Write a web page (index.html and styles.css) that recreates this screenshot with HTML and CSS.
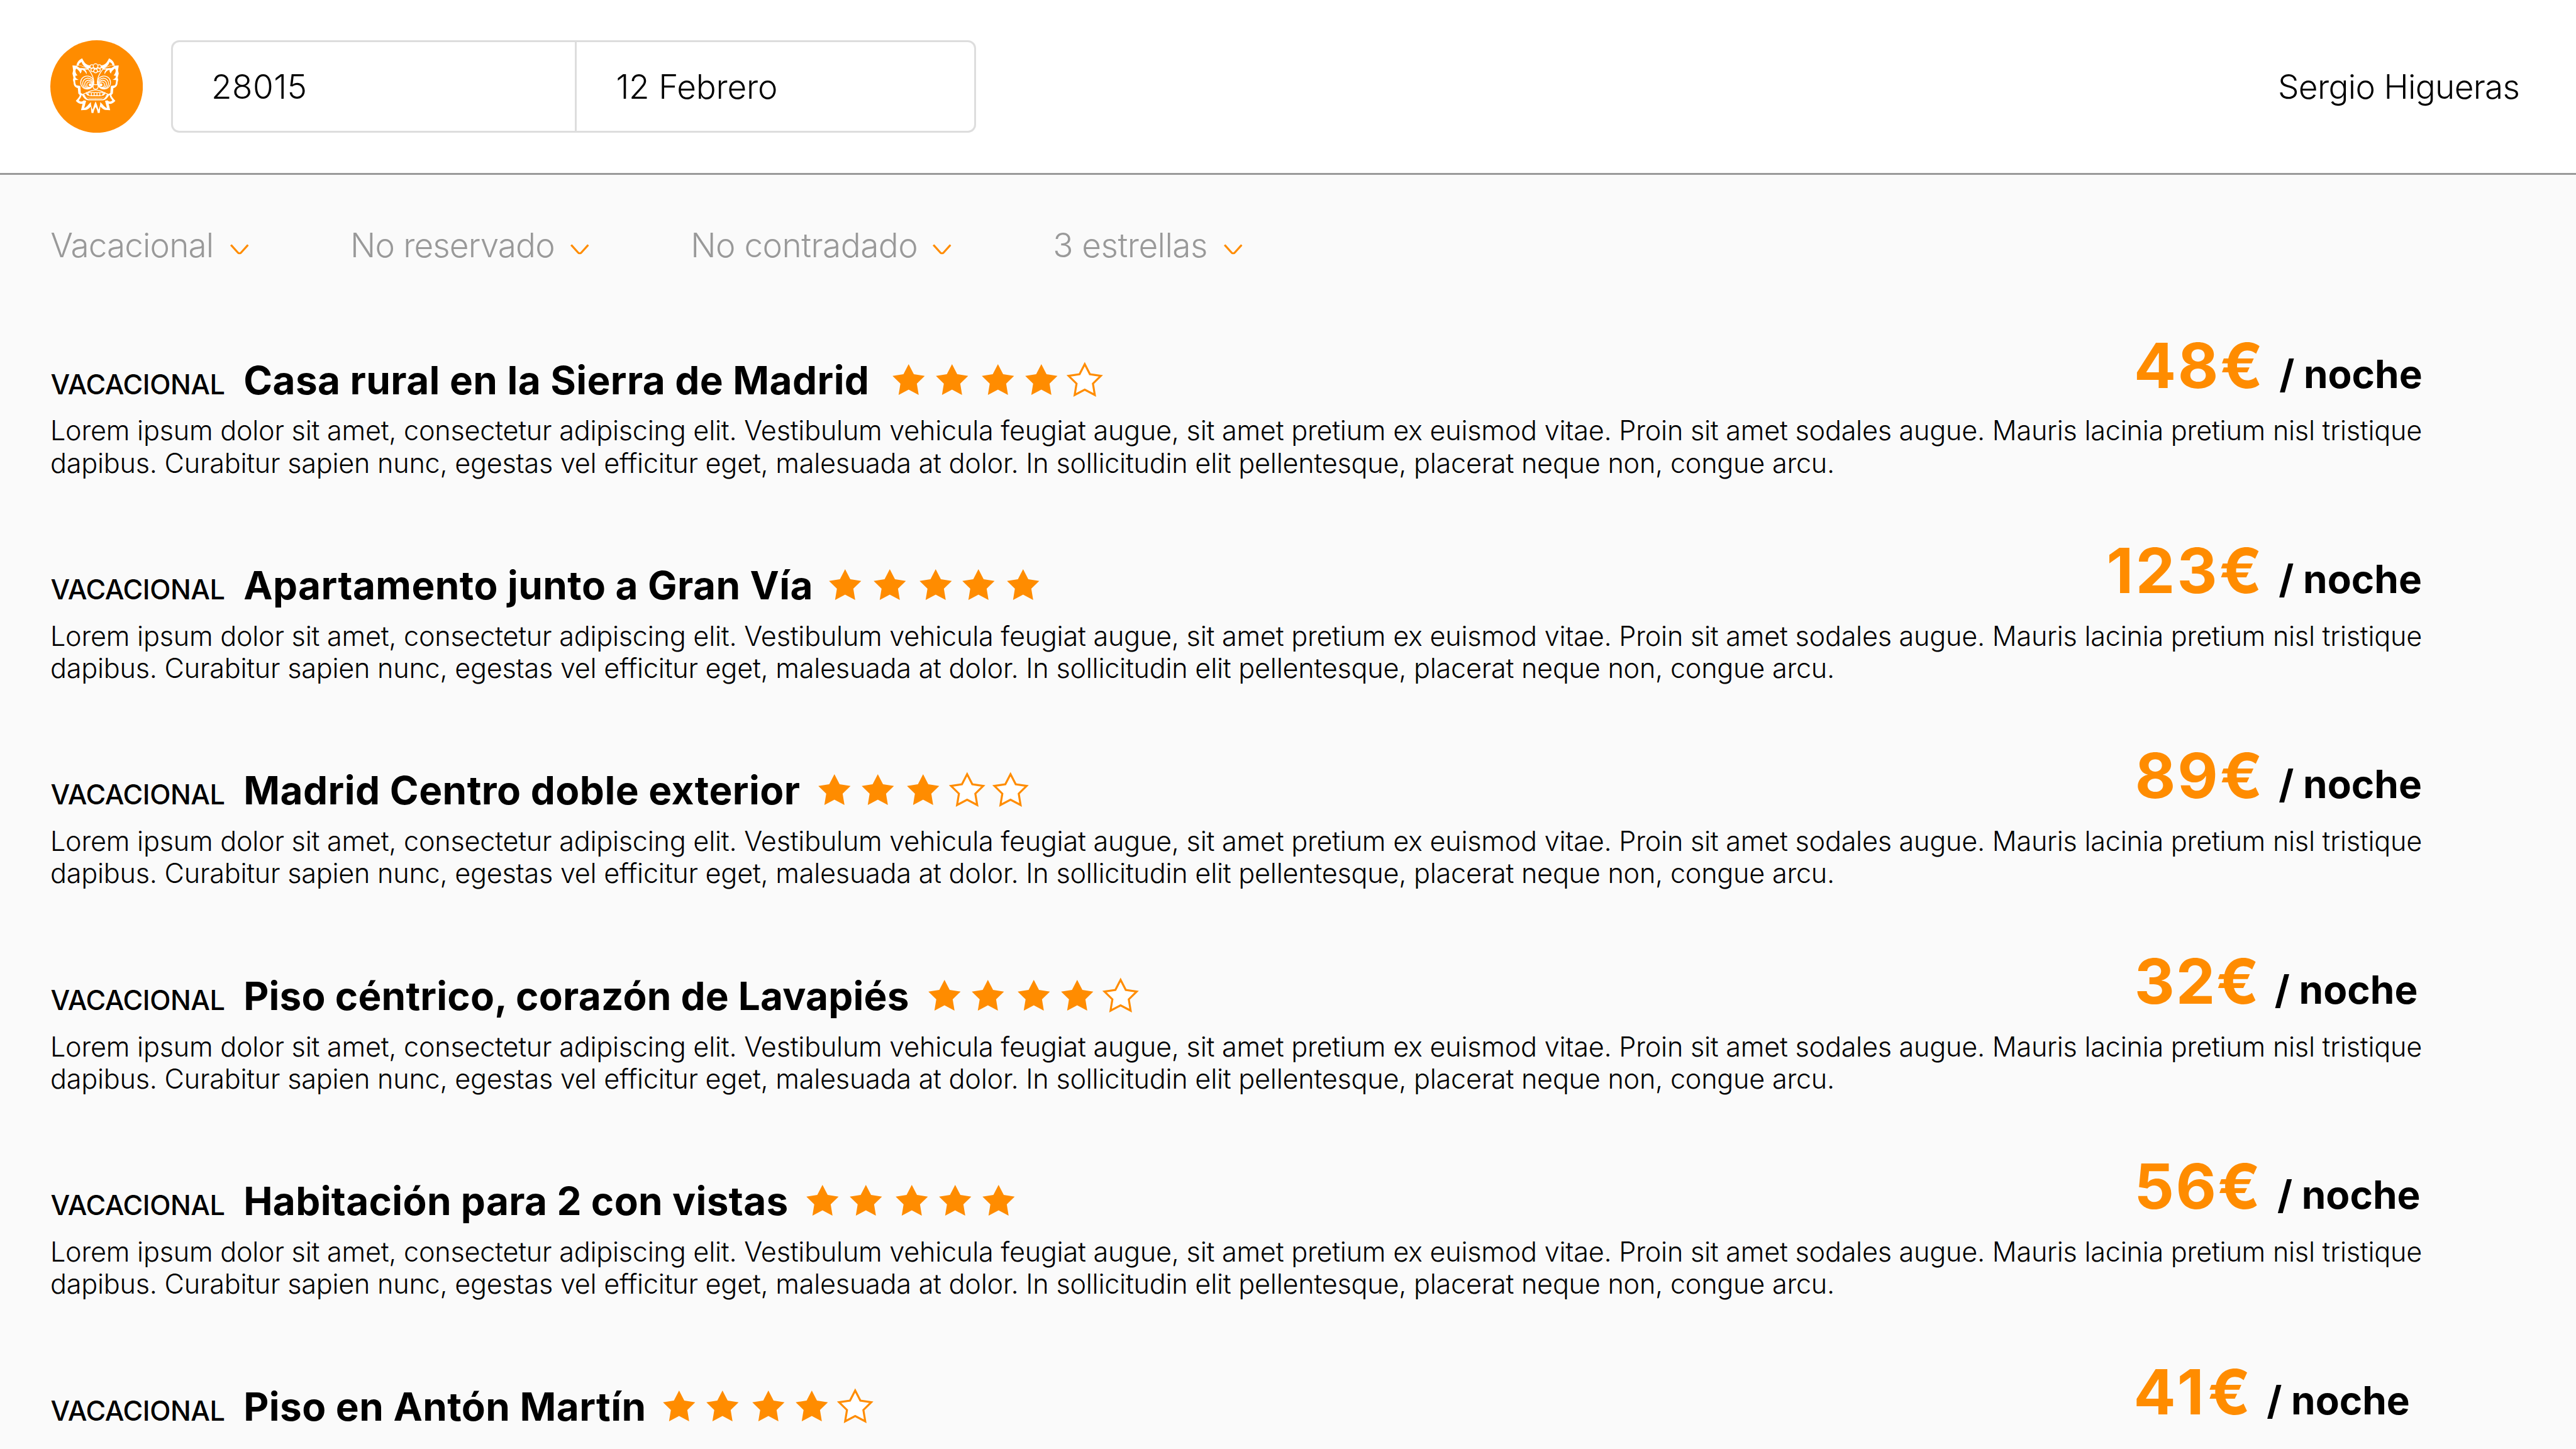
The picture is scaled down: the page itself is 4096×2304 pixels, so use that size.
FILE: index.html
```html
<!DOCTYPE html>
<html lang="es">
<head>
<meta charset="utf-8">
<title>Alojamientos</title>
<link rel="stylesheet" href="styles.css">
</head>
<body>
<svg class="defs" width="0" height="0" aria-hidden="true">
  <symbol id="star" viewBox="-36 -5 72 65" overflow="visible"><path d="M0 0L10.3 20L32 23.3L16.3 38.7L20 61.3L0 50.7L-20 61.3L-16.3 38.7L-32 23.3L-10.3 20Z"/></symbol>
  <symbol id="chevron" viewBox="0 0 37 21"><path d="M1.5 1.5L15.7 17.2Q18.5 20 21.3 17.2L35.5 1.5" fill="none" stroke="currentColor" stroke-width="4"/></symbol>
</svg>
<header class="topbar">
  <svg class="logo" viewBox="60 60 552 552">
    <circle class="disc" cx="336" cy="336" r="276"/>
    <defs>
      <g id="half">
        <path class="solid" fill-rule="evenodd" d="M250 168C229 178 218 193 216 213L234 211C256 217 272 224 284 232L300 224L298 211C276 208 264 198 250 168ZM247 189C235 195 231 200 230 208C250 212 268 218 283 227C264 219 251 207 247 189Z"/>
        <path class="solid" fill-rule="evenodd" d="M192 210L216 212L236 226C252 226 268 228 286 229L284 235L266 234C276 243 279 252 276 263C270 248 260 238 247 236C248 244 245 252 239 259C236 246 226 236 214 229C208 240 208 254 222 270L209 272L211 283C214 288 222 292 229 296L208 297C208 310 210 320 214 328L239 333L242 374L252 381L246 388C244 400 238 408 230 418C238 428 250 428 260 418L274 422C268 440 266 452 262 464C276 460 284 446 302 428C302 448 306 460 313 474C318 456 324 438 330 425L330 458C324 468 319 482 317 494L305 493L302 456C290 466 284 474 274 475L243 477L252 439C238 441 224 436 212 421C224 408 232 400 236 387L227 378L224 345C210 342 198 330 199 312L195 296L198 283L192 259L196 240Z"/>
        <g class="line">
          <circle cx="280" cy="312" r="39"/>
          <circle cx="284" cy="317" r="31"/>
          <circle cx="288" cy="321" r="23"/>
          <circle cx="293" cy="325" r="16"/>
          <path d="M286 231C298 250 319 272 318 302V324"/>
          <path d="M330 325H312M315 329V339C316 348 322 352 331 352"/>
          <path d="M256 381C282 374 296 357 331 357M272 372H331M272 374C278 386 288 391 304 391H331"/>
          <path d="M305 374V390M321.500 374V390"/>
          <circle cx="308" cy="217" r="11"/>
          <circle cx="313" cy="236" r="11"/>
        </g>
        <path class="solid" d="M272 374L285 390H290V378ZM243 382C256 394 264 418 286 418H331V412H288C276 410 274 398 262 388C274 392 280 404 294 404H331V407H292C276 405 268 382 252 380Z"/>
        <circle class="solid" cx="298" cy="326" r="9"/>
      </g>
    </defs>
    <use href="#half"/>
    <use href="#half" transform="translate(660 0) scale(-1 1)"/>
    <circle class="petal" cx="330" cy="243" r="11"/>
    <circle class="petal" cx="330" cy="214" r="14"/>
  </svg>
  <div class="search">
    <div class="field code">28015</div>
    <div class="field date">12 Febrero</div>
  </div>
  <div class="user">Sergio Higueras</div>
</header>
<nav class="filters">
  <div class="filter f1"><span>Vacacional</span><svg><use href="#chevron"/></svg></div>
  <div class="filter f2"><span>No reservado</span><svg><use href="#chevron"/></svg></div>
  <div class="filter f3"><span>No contradado</span><svg><use href="#chevron"/></svg></div>
  <div class="filter f4"><span>3 estrellas</span><svg><use href="#chevron"/></svg></div>
</nav>
<main class="list">
  <article class="card c1">
    <div class="head">
      <span class="kind">VACACIONAL</span><h2>Casa rural en la Sierra de Madrid</h2>
      <div class="stars"><svg><use href="#star"/></svg><svg><use href="#star"/></svg><svg><use href="#star"/></svg><svg><use href="#star"/></svg><svg class="empty"><use href="#star"/></svg></div>
      <div class="price"><b>48€</b><span>/ noche</span></div>
    </div>
    <p>Lorem ipsum dolor sit amet, consectetur adipiscing elit. Vestibulum vehicula feugiat augue, sit amet pretium ex euismod vitae. Proin sit amet sodales augue. Mauris lacinia pretium nisl tristique dapibus. Curabitur sapien nunc, egestas vel efficitur eget, malesuada at dolor. In sollicitudin elit pellentesque, placerat neque non, congue arcu.</p>
  </article>
  <article class="card c2">
    <div class="head">
      <span class="kind">VACACIONAL</span><h2>Apartamento junto a Gran Vía</h2>
      <div class="stars"><svg><use href="#star"/></svg><svg><use href="#star"/></svg><svg><use href="#star"/></svg><svg><use href="#star"/></svg><svg><use href="#star"/></svg></div>
      <div class="price"><b>123€</b><span>/ noche</span></div>
    </div>
    <p>Lorem ipsum dolor sit amet, consectetur adipiscing elit. Vestibulum vehicula feugiat augue, sit amet pretium ex euismod vitae. Proin sit amet sodales augue. Mauris lacinia pretium nisl tristique dapibus. Curabitur sapien nunc, egestas vel efficitur eget, malesuada at dolor. In sollicitudin elit pellentesque, placerat neque non, congue arcu.</p>
  </article>
  <article class="card c3">
    <div class="head">
      <span class="kind">VACACIONAL</span><h2>Madrid Centro doble exterior</h2>
      <div class="stars"><svg><use href="#star"/></svg><svg><use href="#star"/></svg><svg><use href="#star"/></svg><svg class="empty"><use href="#star"/></svg><svg class="empty"><use href="#star"/></svg></div>
      <div class="price"><b>89€</b><span>/ noche</span></div>
    </div>
    <p>Lorem ipsum dolor sit amet, consectetur adipiscing elit. Vestibulum vehicula feugiat augue, sit amet pretium ex euismod vitae. Proin sit amet sodales augue. Mauris lacinia pretium nisl tristique dapibus. Curabitur sapien nunc, egestas vel efficitur eget, malesuada at dolor. In sollicitudin elit pellentesque, placerat neque non, congue arcu.</p>
  </article>
  <article class="card c4">
    <div class="head">
      <span class="kind">VACACIONAL</span><h2>Piso céntrico, corazón de Lavapiés</h2>
      <div class="stars"><svg><use href="#star"/></svg><svg><use href="#star"/></svg><svg><use href="#star"/></svg><svg><use href="#star"/></svg><svg class="empty"><use href="#star"/></svg></div>
      <div class="price"><b>32€</b><span>/ noche</span></div>
    </div>
    <p>Lorem ipsum dolor sit amet, consectetur adipiscing elit. Vestibulum vehicula feugiat augue, sit amet pretium ex euismod vitae. Proin sit amet sodales augue. Mauris lacinia pretium nisl tristique dapibus. Curabitur sapien nunc, egestas vel efficitur eget, malesuada at dolor. In sollicitudin elit pellentesque, placerat neque non, congue arcu.</p>
  </article>
  <article class="card c5">
    <div class="head">
      <span class="kind">VACACIONAL</span><h2>Habitación para 2 con vistas</h2>
      <div class="stars"><svg><use href="#star"/></svg><svg><use href="#star"/></svg><svg><use href="#star"/></svg><svg><use href="#star"/></svg><svg><use href="#star"/></svg></div>
      <div class="price"><b>56€</b><span>/ noche</span></div>
    </div>
    <p>Lorem ipsum dolor sit amet, consectetur adipiscing elit. Vestibulum vehicula feugiat augue, sit amet pretium ex euismod vitae. Proin sit amet sodales augue. Mauris lacinia pretium nisl tristique dapibus. Curabitur sapien nunc, egestas vel efficitur eget, malesuada at dolor. In sollicitudin elit pellentesque, placerat neque non, congue arcu.</p>
  </article>
  <article class="card c6">
    <div class="head">
      <span class="kind">VACACIONAL</span><h2>Piso en Antón Martín</h2>
      <div class="stars"><svg><use href="#star"/></svg><svg><use href="#star"/></svg><svg><use href="#star"/></svg><svg><use href="#star"/></svg><svg class="empty"><use href="#star"/></svg></div>
      <div class="price"><b>41€</b><span>/ noche</span></div>
    </div>
  </article>
</main>
</body>
</html>
```
FILE: styles.css
```css
* { box-sizing: border-box; }
html, body { margin: 0; height: 2304px; overflow: hidden; }
body {
  background: #fafafa;
  color: #000;
  font-family: Inter, "Liberation Sans", sans-serif;
  font-weight: 300;
}
.defs { display: none; }

/* Top bar */
.topbar {
  display: flex;
  align-items: center;
  height: 278.4px;
  padding: 0 89.7px 0 80px;
  background: #fff;
  border-bottom: 3px solid #999;
  font-size: 53.1px;
  line-height: 64px;
}
.logo { width: 147.2px; height: 147.2px; flex: none; }
.disc { fill: #ff8c00; }
.solid { fill: #fff; }
.line { fill: none; stroke: #fff; stroke-width: 5; }
.petal { fill: #ff8c00; stroke: #fff; stroke-width: 5; }
.search {
  display: flex;
  width: 1280px;
  height: 147.2px;
  margin-left: 44.8px;
  border: 3px solid #ddd;
  border-radius: 13px;
}
.field { display: flex; align-items: center; padding-left: 61px; }
.code { width: 642.4px; border-right: 3px solid #ddd; letter-spacing: .47px; }
.date { padding-left: 62px; letter-spacing: -.2px; }
.user { margin-left: auto; letter-spacing: -.69px; }

/* Filters */
.filters {
  display: flex;
  gap: 161.4px;
  padding: 80px 0 0 80.3px;
  color: #999;
  font-size: 53.1px;
  line-height: 64px;
}
.filter { display: flex; align-items: baseline; }
.filter span { letter-spacing: var(--track); }
.filter svg {
  width: 29.6px;
  height: 16.8px;
  margin-left: var(--gap);
  color: #ff8c00;
  transform: translateY(-4.8px);
}
.f1 { --track: -.9px; --gap: 26.9px; }
.f2 { --track: -.9px; --gap: 25.6px; }
.f3 { --track: -.53px; --gap: 24.1px; }
.f4 { --track: -.54px; --gap: 26.6px; }

/* Listing */
.list { width: 3852px; padding: 117.6px 0 0 80px; }
.card { height: 326.4px; }
.card:last-child { height: 101.6px; }
.head {
  display: flex;
  align-items: baseline;
  height: 101.6px;
}
.kind {
  flex: none;
  width: 307.2px;
  padding-left: .5px;
  font-size: 43.3px;
  font-weight: 500;
  letter-spacing: -.41px;
}
h2 {
  flex: none;
  margin: 0;
  font-size: 62.05px;
  line-height: 74px;
  font-weight: 700;
  letter-spacing: var(--title-track);
  white-space: nowrap;
}
.stars { display: flex; gap: 11.6px; margin-left: var(--stars-gap); }
.stars svg {
  width: 57.6px;
  height: 52px;
  overflow: visible;
  fill: #ff8c00;
}
.stars svg:nth-child(3) { margin-left: 3.2px; }
.stars .empty { fill: #fff; stroke: #ff8c00; stroke-width: 4; }
.price {
  display: flex;
  align-items: baseline;
  gap: var(--unit-gap);
  margin-top: 9.6px;
  margin-left: auto;
  padding-right: var(--price-inset);
  line-height: 83px;
  white-space: nowrap;
  transform: translateY(-9.6px);
}
.price b { font-size: 99.3px; font-weight: 700; color: #ff8c00; letter-spacing: var(--price-track); }
.price span { font-size: 62.05px; font-weight: 700; }
.card p {
  margin: 17.9px 0 0;
  font-size: 43.2px;
  line-height: 51.2px;
  letter-spacing: -.256px;
}
.c1 { --title-track: .41px; --stars-gap: 33.6px; --price-track: 2.8px; --unit-gap: 23.1px; --price-inset: .3px; }
.c2 { --title-track: .43px; --stars-gap: 22.4px; --price-track: 3.3px; --unit-gap: 23.2px; --price-inset: 1.1px; }
.c3 { --title-track: .47px; --stars-gap: 25.3px; --price-track: 3px; --unit-gap: 22.6px; --price-inset: 1.1px; }
.c4 { --title-track: .2px; --stars-gap: 27.4px; --price-track: 1.8px; --unit-gap: 23px; --price-inset: 7.6px; }
.c5 { --title-track: .33px; --stars-gap: 25.6px; --price-track: 2.3px; --unit-gap: 24.5px; --price-inset: 3.5px; }
.c6 { --title-track: .43px; --stars-gap: 23.7px; --price-track: 5.8px; --unit-gap: 20.1px; --price-inset: 20.2px; }
.c2 .stars { gap: 12.8px; }
.c2 .stars svg:nth-child(4) { margin-left: -2.6px; }
```
